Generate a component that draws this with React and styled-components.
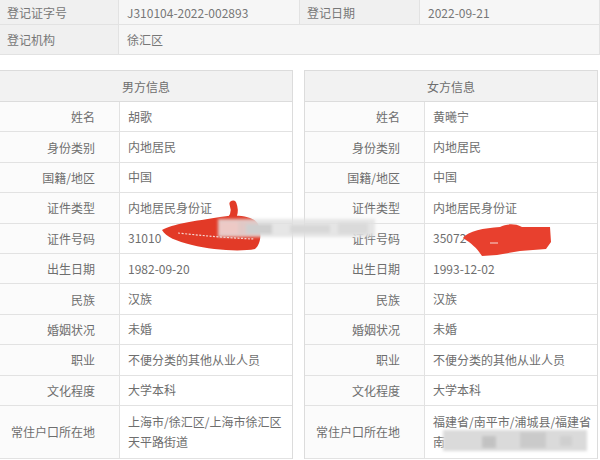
import styled, { createGlobalStyle } from "styled-components";

const GlobalStyle = createGlobalStyle`
  html, body {
    margin: 0;
    background: #fff;
  }
  body {
    font-family: "Noto Sans CJK SC", "Noto Sans", sans-serif;
    color: #707070;
  }
`;

const Page = styled.div`
  position: relative;
  width: 600px;
  height: 460px;
  overflow: hidden;
  background: #fff;
`;

const TopTable = styled.div`
  display: grid;
  grid-template-columns: 119px 181px 120px 1fr;
  grid-template-rows: 25px 30px;
  font-size: 12px;
`;

const TopCell = styled.div`
  display: flex;
  align-items: center;
  padding-left: ${(p) => (p.$label ? "7px" : "8px")};
  background: ${(p) => (p.$label ? "#f0f0f0" : "#f6f6f6")};
  border-right: 1px solid #e2e2e2;
  border-bottom: 1px solid #e2e2e2;
  grid-column: ${(p) => p.$span || "auto"};
  color: #777;
`;

const Panels = styled.div`
  display: grid;
  grid-template-columns: 294px 294px;
  column-gap: 11px;
  margin-top: 15px;
  margin-left: -1px;
`;

const Panel = styled.div`
  border: 1px solid #dcdcdc;
  border-bottom: none;
`;

const PanelHeader = styled.div`
  box-sizing: border-box;
  height: 31px;
  display: flex;
  align-items: center;
  justify-content: center;
  background: #f2f2f2;
  border-bottom: 1px solid #dcdcdc;
  font-size: 12px;
  color: #6e6e6e;
`;

const Row = styled.div`
  box-sizing: border-box;
  display: grid;
  grid-template-columns: 120px 1fr;
  height: ${(p) => (p.$tall ? "53px" : "30.4px")};
  border-bottom: 1px solid #e2e2e2;
  font-size: 12px;
`;

const Label = styled.div`
  display: flex;
  align-items: center;
  justify-content: flex-end;
  padding-right: 24px;
  background: #fbfbfb;
  border-right: 1px solid #e2e2e2;
  color: #6e6e6e;
`;

const Value = styled.div`
  display: flex;
  align-items: center;
  padding: 0 6px 0 8px;
  line-height: 20px;
  color: #6e6e6e;
  white-space: nowrap;
`;

const Marks = styled.svg`
  position: absolute;
  left: 0;
  top: 0;
  pointer-events: none;
`;

const fields = [
  ["姓名", "胡歌", "黄曦宁"],
  ["身份类别", "内地居民", "内地居民"],
  ["国籍/地区", "中国", "中国"],
  ["证件类型", "内地居民身份证", "内地居民身份证"],
  ["证件号码", "31010", "35072"],
  ["出生日期", "1982-09-20", "1993-12-02"],
  ["民族", "汉族", "汉族"],
  ["婚姻状况", "未婚", "未婚"],
  ["职业", "不便分类的其他从业人员", "不便分类的其他从业人员"],
  ["文化程度", "大学本科", "大学本科"],
];

function InfoPanel({ title, side, address }) {
  return (
    <Panel>
      <PanelHeader>{title}</PanelHeader>
      {fields.map((f) => (
        <Row key={f[0]}>
          <Label>{f[0]}</Label>
          <Value>{side === "m" ? f[1] : f[2]}</Value>
        </Row>
      ))}
      <Row $tall>
        <Label>常住户口所在地</Label>
        <Value>{address}</Value>
      </Row>
    </Panel>
  );
}

export default function App() {
  return (
    <Page>
      <GlobalStyle />
      <TopTable>
        <TopCell $label>登记证字号</TopCell>
        <TopCell>J310104-2022-002893</TopCell>
        <TopCell $label>登记日期</TopCell>
        <TopCell>2022-09-21</TopCell>
        <TopCell $label>登记机构</TopCell>
        <TopCell $span="2 / 5">徐汇区</TopCell>
      </TopTable>
      <Panels>
        <InfoPanel
          title="男方信息"
          side="m"
          address={
            <span>
              上海市/徐汇区/上海市徐汇区
              <br />
              天平路街道
            </span>
          }
        />
        <InfoPanel
          title="女方信息"
          side="f"
          address={
            <span>
              福建省/南平市/浦城县/福建省
              <br />
              南
            </span>
          }
        />
      </Panels>
      <Marks width="600" height="460" viewBox="0 0 600 460">
        <defs>
          <filter id="blur" x="-20%" y="-50%" width="140%" height="200%">
            <feGaussianBlur stdDeviation="1.6" />
          </filter>
        </defs>
        {/* red scribble, left */}
        <path
          d="M162 230 C172 224 195 221 220 217 C238 214 254 216 258 224 C262 233 261 244 255 249 C240 252 212 250 192 245 C176 241 166 237 162 230 Z"
          fill="#e23a27"
        />
        <path
          d="M233 204 C236 212 233 219 226 224"
          stroke="#e23a27"
          strokeWidth="7"
          strokeLinecap="round"
          fill="none"
        />
        <path
          d="M178 233 C205 236 230 238 254 239"
          stroke="#f6d7d2"
          strokeWidth="1.2"
          strokeDasharray="2 1.5"
          fill="none"
        />
        {/* blurred strips */}
        <g filter="url(#blur)">
          <rect x="218" y="219" width="157" height="18" fill="#e2e2e2" opacity="0.85" />
          <rect x="220" y="222" width="18" height="12" fill="#f0c9c4" opacity="0.8" />
          <rect x="246" y="224" width="26" height="10" fill="#cfcfcf" />
          <rect x="290" y="225" width="40" height="8" fill="#d8d8d8" />
          <rect x="338" y="223" width="30" height="11" fill="#dadada" />
          <rect x="443" y="430" width="144" height="21" fill="#dadada" />
          <rect x="482" y="436" width="14" height="12" fill="#c2c2c2" />
          <rect x="520" y="432" width="26" height="16" fill="#cacaca" />
          <rect x="560" y="436" width="12" height="10" fill="#cfcfcf" />
        </g>
        {/* red blob, right */}
        <path
          d="M463 238 C468 231 484 228 500 227 C506 224 514 223 522 227 L550 227 L551 242 L546 249 L520 251 L497 255 L482 256 C477 248 471 243 463 238 Z"
          fill="#e8402e"
        />
        <path d="M490 243 L498 243" stroke="#f3c2bb" strokeWidth="1.2" />
      </Marks>
    </Page>
  );
}
